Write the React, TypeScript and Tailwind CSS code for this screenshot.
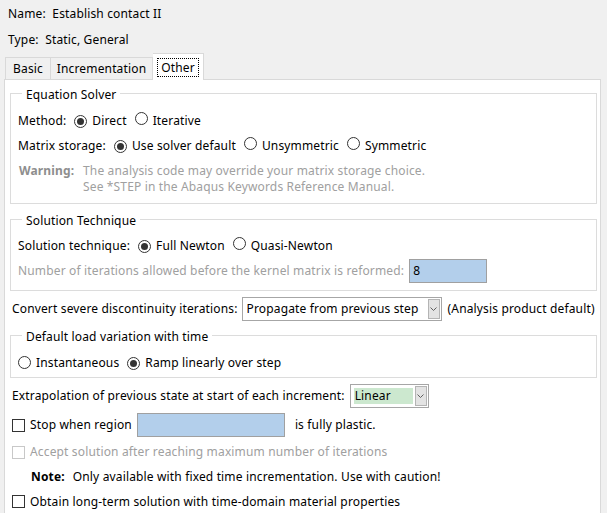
import React from "react";

function Radio({ checked }: { checked?: boolean }) {
  return (
    <span className="inline-flex w-[13px] h-[13px] rounded-full border border-[#333] bg-white items-center justify-center shrink-0">
      {checked && <span className="w-[7px] h-[7px] rounded-full bg-[#333]" />}
    </span>
  );
}

function Check({ disabled }: { disabled?: boolean }) {
  return (
    <span
      className={`inline-block w-[13px] h-[13px] border bg-white shrink-0 ${
        disabled ? "border-[#c8c8c8]" : "border-[#333]"
      }`}
    />
  );
}

function Arrow() {
  return (
    <span className="flex w-[12px] h-[20px] bg-[#e3e3e3] border border-[#b4b4b4] items-center justify-center shrink-0">
      <svg width="7" height="4" viewBox="0 0 7 4">
        <path d="M0.5 0.5 L3.5 3.5 L6.5 0.5" fill="none" stroke="#606060" strokeWidth="1" />
      </svg>
    </span>
  );
}

function Group({ title, children, className = "" }: { title: string; children: React.ReactNode; className?: string }) {
  return (
    <fieldset className={`ml-[5px] w-[587px] border border-[#dcdcdc] px-[7px] ${className}`}>
      <legend className="ml-[4px] px-[4px] leading-[16px]">
        <span className="inline-block translate-y-[2px]">{title}</span>
      </legend>
      {children}
    </fieldset>
  );
}

export default function App() {
  return (
    <div className="w-[607px] h-[513px] overflow-hidden bg-[#f0f0f0] text-[12px] tracking-[0.15px] text-black font-['Noto_Sans',sans-serif]">
      <div className="pt-[6px] pl-[8px]">
        <div className="leading-[16px]">Name:&nbsp; Establish contact II</div>
        <div className="leading-[16px] mt-[10px]">Type:&nbsp; Static, General</div>
      </div>

      {/* tabs */}
      <div className="relative z-10 flex items-end h-[26px] mt-[5px] pl-[5px]">
        <div className="h-[22px] w-[46px] border border-b-0 border-[#d9d9d9] flex items-center justify-center">Basic</div>
        <div className="h-[22px] w-[102px] border border-b-0 border-l-0 border-[#d9d9d9] flex items-center justify-center">
          Incrementation
        </div>
        <div className="h-[27px] -mb-px w-[51px] border border-b-0 border-l-0 border-[#d9d9d9] bg-white flex items-center justify-center">
          <span className="border border-dotted border-black px-[3px] leading-[17px]">Other</span>
        </div>
      </div>

      <div className="ml-[4px] w-[597px] h-[460px] border border-[#d9d9d9] bg-white">
        <Group title="Equation Solver" className="mt-[5px]">
          <div className="pt-[7px] pb-[8px]">
            <div className="h-[25px] flex items-center">
              <span>Method:</span>
              <span className="ml-[8px]"><Radio checked /></span>
              <span className="ml-[5px]">Direct</span>
              <span className="ml-[8px]"><Radio /></span>
              <span className="ml-[5px]">Iterative</span>
            </div>
            <div className="h-[25px] flex items-center">
              <span>Matrix storage:</span>
              <span className="ml-[8px]"><Radio checked /></span>
              <span className="ml-[5px]">Use solver default</span>
              <span className="ml-[8px]"><Radio /></span>
              <span className="ml-[5px]">Unsymmetric</span>
              <span className="ml-[8px]"><Radio /></span>
              <span className="ml-[5px]">Symmetric</span>
            </div>
            <div className="mt-[5px] flex text-[#a0a0a0] leading-[16px] pl-[1px]">
              <span className="font-bold text-[#8e8e8e] w-[64px] shrink-0">Warning:</span>
              <div>
                <div>The analysis code may override your matrix storage choice.</div>
                <div>See *STEP in the Abaqus Keywords Reference Manual.</div>
              </div>
            </div>
          </div>
        </Group>

        <Group title="Solution Technique" className="mt-[7px]">
          <div className="pt-[6px] pb-[6px]">
            <div className="h-[25px] flex items-center">
              <span>Solution technique:</span>
              <span className="ml-[8px]"><Radio checked /></span>
              <span className="ml-[5px]">Full Newton</span>
              <span className="ml-[8px]"><Radio /></span>
              <span className="ml-[5px]">Quasi-Newton</span>
            </div>
            <div className="h-[26px] flex items-center">
              <span className="text-[#a0a0a0]">Number of iterations allowed before the kernel matrix is reformed:</span>
              <span className="ml-[5px] w-[78px] h-[24px] bg-[#b3cfeb] border border-[#a0a0a0] pl-[3px] flex items-center">8</span>
            </div>
          </div>
        </Group>

        <div className="mt-[6px] h-[24px] flex items-center pl-[7px]">
          <span>Convert severe discontinuity iterations:</span>
          <span className="ml-[4px] w-[200px] h-[24px] border border-[#a6a6a6] bg-white flex items-center justify-between pl-[4px] pr-[1px]">
            <span>Propagate from previous step</span>
            <Arrow />
          </span>
          <span className="ml-[6px]">(Analysis product default)</span>
        </div>

        <Group title="Default load variation with time" className="mt-[6px]">
          <div className="pt-[8px] pb-[3px]">
            <div className="h-[23px] flex items-center">
              <Radio />
              <span className="ml-[5px]">Instantaneous</span>
              <span className="ml-[8px]"><Radio checked /></span>
              <span className="ml-[5px]">Ramp linearly over step</span>
            </div>
          </div>
        </Group>

        <div className="mt-[6px] h-[24px] flex items-center pl-[7px]">
          <span>Extrapolation of previous state at start of each increment:</span>
          <span className="ml-[5px] w-[79px] h-[24px] border border-[#a6a6a6] bg-white flex items-center pl-[3px] pr-[1px] gap-[2px]">
            <span className="flex-1 h-[16px] bg-[#cce8cf] flex items-center pl-[1px]">Linear</span>
            <Arrow />
          </span>
        </div>

        <div className="mt-[5px] h-[24px] flex items-center pl-[7px]">
          <Check />
          <span className="ml-[5px]">Stop when region</span>
          <span className="ml-[5px] w-[148px] h-[24px] bg-[#b3cfeb] border border-[#a0a0a0]" />
          <span className="ml-[10px]">is fully plastic.</span>
        </div>

        <div className="mt-[3px] h-[24px] flex items-center pl-[7px] text-[#a0a0a0]">
          <Check disabled />
          <span className="ml-[5px]">Accept solution after reaching maximum number of iterations</span>
        </div>

        <div className="h-[25px] flex items-center pl-[26px]">
          <span className="font-bold">Note:</span>
          <span className="ml-[8px]">Only available with fixed time incrementation. Use with caution!</span>
        </div>

        <div className="h-[25px] flex items-center pl-[7px]">
          <Check />
          <span className="ml-[5px]">Obtain long-term solution with time-domain material properties</span>
        </div>
      </div>
    </div>
  );
}
